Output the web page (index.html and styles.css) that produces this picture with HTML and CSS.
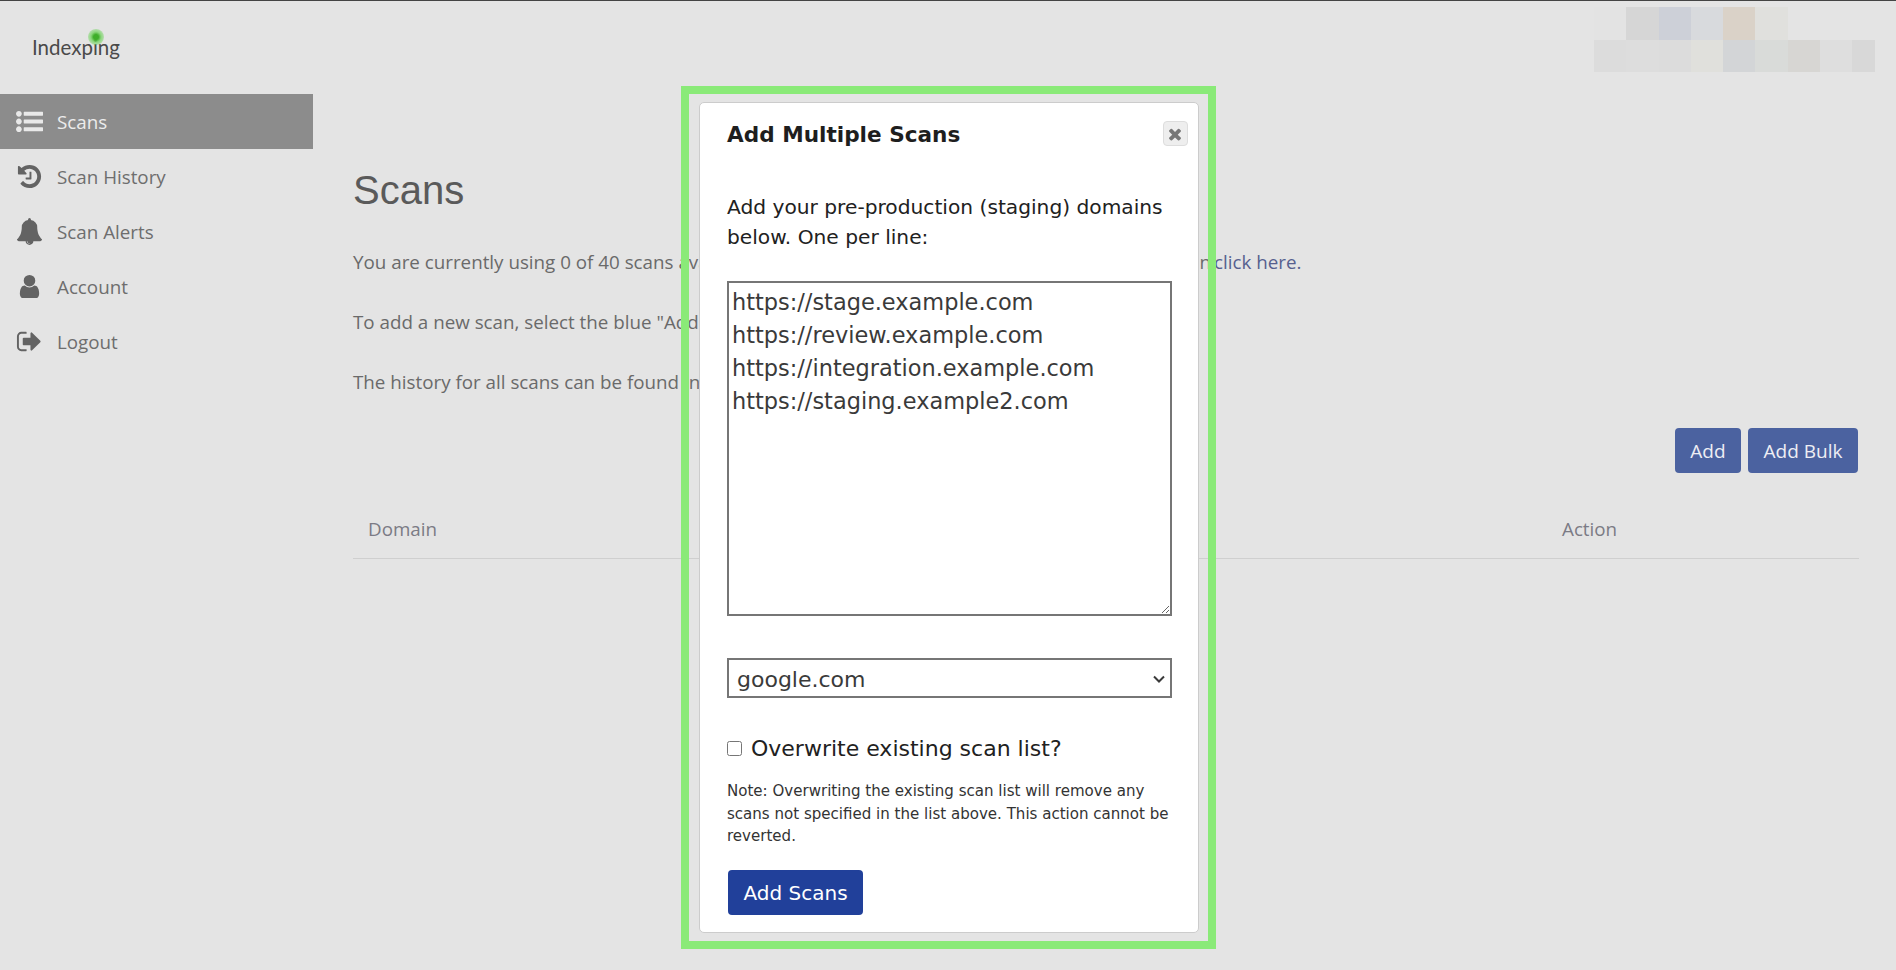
FILE: index.html
```html
<!DOCTYPE html>
<html lang="en">
<head>
<meta charset="utf-8">
<title>Scans</title>
<link rel="stylesheet" href="styles.css">
</head>
<body>
<div class="app">
  <header class="topbar">
    <div class="logo"><span class="logo-dot"></span>Indexping</div>
    <div class="account-blur">
      <i class="c c1"></i><i class="c c2"></i><i class="c c3"></i><i class="c c4"></i><i class="c c5"></i><i class="c c6"></i><i class="c c0"></i><i class="c c0"></i><i class="c c0"></i>
      <i class="c c7"></i><i class="c c8"></i><i class="c c7"></i><i class="c c9"></i><i class="c c10"></i><i class="c c11"></i><i class="c c12"></i><i class="c c13"></i><i class="c c14"></i>
    </div>
  </header>
  <div class="body-row">
    <nav class="sidebar">
      <a class="nav-item active"><svg class="nav-icon" viewBox="0 0 1792 1792"><path d="M384 1408q0 80-56 136t-136 56-136-56-56-136 56-136 136-56 136 56 56 136zm0-512q0 80-56 136t-136 56-136-56-56-136 56-136 136-56 136 56 56 136zm1408 416v192q0 13-9.500 22.500t-22.500 9.500h-1216q-13 0-22.500-9.500t-9.500-22.500v-192q0-13 9.500-22.500t22.500-9.500h1216q13 0 22.500 9.500t9.500 22.500zm-1408-928q0 80-56 136t-136 56-136-56-56-136 56-136 136-56 136 56 56 136zm1408 416v192q0 13-9.500 22.500t-22.500 9.500h-1216q-13 0-22.500-9.500t-9.500-22.500v-192q0-13 9.500-22.500t22.500-9.500h1216q13 0 22.500 9.500t9.500 22.500zm0-512v192q0 13-9.500 22.500t-22.500 9.500h-1216q-13 0-22.500-9.500t-9.500-22.500v-192q0-13 9.500-22.500t22.500-9.500h1216q13 0 22.500 9.500t9.500 22.500z"/></svg>Scans</a>
      <a class="nav-item"><svg class="nav-icon" viewBox="0 0 1792 1792"><path d="M1664 896q0 156-61 298t-164 245-245 164-298 61q-172 0-327-72.500t-264-204.500q-7-10-6.500-22.500t8.500-20.500l137-138q10-9 25-9 16 2 23 12 73 95 179 147t225 52q104 0 198.500-40.500t163.500-109.500 109.500-163.500 40.500-198.500-40.500-198.500-109.500-163.500-163.500-109.500-198.500-40.500q-98 0-188 35.500t-160 101.500l137 138q31 30 14 69-17 40-59 40h-448q-26 0-45-19t-19-45v-448q0-42 40-59 39-17 69 14l130 129q107-101 244.500-156.500t284.500-55.500q156 0 298 61t245 164 164 245 61 298zm-640-288v448q0 14-9 23t-23 9h-320q-14 0-23-9t-9-23v-64q0-14 9-23t23-9h224v-352q0-14 9-23t23-9h64q14 0 23 9t9 23z"/></svg>Scan History</a>
      <a class="nav-item"><svg class="nav-icon" viewBox="0 0 1792 1792"><path d="M912 1696q0-16-16-16-59 0-101.500-42.500t-42.500-101.500q0-16-16-16t-16 16q0 73 51.500 124.500t124.500 51.500q16 0 16-16zm816-288q0 52-38 90t-90 38h-448q0 106-75 181t-181 75-181-75-75-181h-448q-52 0-90-38t-38-90q50-42 91-88t85-119.500 74.500-158.500 50-206 19.500-260q0-152 117-282.500t307-158.500q-8-19-8-39 0-40 28-68t68-28 68 28 28 68q0 20-8 39 190 28 307 158.500t117 282.500q0 139 19.500 260t50 206 74.500 158.500 85 119.500 91 88z"/></svg>Scan Alerts</a>
      <a class="nav-item"><svg class="nav-icon" viewBox="0 0 1792 1792"><path d="M1536 1399q0 109-62.500 187t-150.500 78h-854q-88 0-150.500-78t-62.500-187q0-85 8.500-160.500t31.500-152 58.500-131 94-89 134.500-34.500q131 128 313 128t313-128q76 0 134.500 34.500t94 89 58.500 131 31.500 152 8.500 160.500zm-256-887q0 159-112.500 271.500t-271.500 112.500-271.500-112.500-112.500-271.500 112.500-271.500 271.500-112.500 271.500 112.500 112.500 271.500z"/></svg>Account</a>
      <a class="nav-item"><svg class="nav-icon" viewBox="0 0 1792 1792"><path d="M704 1440q0 4 1 20t.5 26.500-3 23.500-10 19.500-20.500 6.500h-320q-119 0-203.500-84.500t-84.500-203.500v-704q0-119 84.500-203.500t203.500-84.500h320q13 0 22.500 9.500t9.500 22.500q0 4 1 20t.5 26.500-3 23.500-10 19.500-20.500 6.500h-320q-66 0-113 47t-47 113v704q0 66 47 113t113 47h312l11.500 1 11.500 3 8 5.500 7 9 2 13.500zm928-544q0 26-19 45l-544 544q-19 19-45 19t-45-19-19-45v-288h-448q-26 0-45-19t-19-45v-384q0-26 19-45t45-19h448v-288q0-26 19-45t45-19 45 19l544 544q19 19 19 45z"/></svg>Logout</a>
    </nav>
    <main class="content">
      <h1 class="page-title">Scans</h1>
      <p class="intro">You are currently using 0 of 40 scans available on your plan. To get more scans, upgrade your plan <a class="link">click here.</a></p>
      <p class="intro">To add a new scan, select the blue "Add" button below.</p>
      <p class="intro">The history for all scans can be found in the Scan History section.</p>
      <div class="actions">
        <button class="btn">Add</button>
        <button class="btn">Add Bulk</button>
      </div>
      <div class="table-head">
        <span class="col-domain">Domain</span>
        <span class="col-action">Action</span>
      </div>
    </main>
  </div>
</div>

<div class="highlight">
  <form class="modal">
    <div class="modal-head">
      <h2 class="modal-title">Add Multiple Scans</h2>
      <button type="button" class="close"><svg class="close-icon" viewBox="0 0 1792 1792"><path d="M1490 1322q0 40-28 68l-136 136q-28 28-68 28t-68-28l-294-294-294 294q-28 28-68 28t-68-28l-136-136q-28-28-28-68t28-68l294-294-294-294q-28-28-28-68t28-68l136-136q28-28 68-28t68 28l294 294 294-294q28-28 68-28t68 28l136 136q28 28 28 68t-28 68l-294 294 294 294q28 28 28 68z"/></svg></button>
    </div>
    <p class="modal-intro">Add your pre-production (staging) domains below. One per line:</p>
    <textarea class="domains" spellcheck="false">https://stage.example.com
https://review.example.com
https://integration.example.com
https://staging.example2.com</textarea>
    <div class="engine-wrap">
      <select class="engine"><option>google.com</option></select>
      <svg class="chevron" viewBox="0 0 12 8"><path d="M1 1.500 6 6.500 11 1.500"/></svg>
    </div>
    <label class="overwrite"><input type="checkbox" class="check">Overwrite existing scan list?</label>
    <p class="note">Note: Overwriting the existing scan list will remove any scans not specified in the list above. This action cannot be reverted.</p>
    <button type="button" class="submit">Add Scans</button>
  </form>
</div>
</body>
</html>
```

FILE: styles.css
```css
* { box-sizing: border-box; }
html, body { margin: 0; height: 100%; overflow: hidden; }
body {
  background: #e4e4e4;
  font-family: "Open Sans", "Liberation Sans", sans-serif;
  color: #6a6a6a;
  position: relative;
}
.app { display: flex; flex-direction: column; height: 970px; }

.topbar {
  height: 94px;
  flex: none;
  border-top: 1px solid #444;
  display: flex;
  justify-content: space-between;
  padding: 6px 21px 0 32px;
}
.logo {
  position: relative;
  font-family: "Lato", "Open Sans", sans-serif;
  font-size: 20.500px;
  color: #4a4a4a;
  line-height: 24px;
  margin-top: 28px;
  height: 24px;
}
.logo-dot {
  position: absolute;
  left: 56px;
  top: -6px;
  width: 16px;
  height: 16px;
  border-radius: 50%;
  background: radial-gradient(circle, #3fae2a 0 22%, rgba(110, 210, 90, .75) 45%, rgba(140, 225, 120, 0) 100%);
}
.account-blur {
  display: grid;
  grid-template-columns: repeat(8, 32.250px) 23px;
  grid-auto-rows: 32.500px;
  height: 65px;
}
.c { display: block; }
.c0 { background: transparent; }
.c1 { background: #e3e3e3; }
.c2 { background: #d6d6d6; }
.c3 { background: #cdd0d8; }
.c4 { background: #d8dadd; }
.c5 { background: #dad2c8; }
.c6 { background: #e0e0dd; }
.c7 { background: #dcdcdc; }
.c8 { background: #dddddd; }
.c9 { background: #e0e0dc; }
.c10 { background: #d3d5d7; }
.c11 { background: #d9dbd9; }
.c12 { background: #d7d6d3; }
.c13 { background: #dedede; }
.c14 { background: #d8d8d8; }

.body-row { display: flex; flex: 1; }
.sidebar { width: 313px; flex: none; }
.nav-item {
  display: flex;
  align-items: center;
  height: 55px;
  padding-left: 16px;
  font-size: 18.800px;
  color: #6e6e6e;
}
.nav-item.active { background: #8c8c8c; color: #ececec; }
.nav-icon { width: 27px; height: 27px; fill: #636363; margin-right: 14px; flex: none; }
.active .nav-icon { fill: #e9e9e9; }

.content { flex: 1; padding: 0 37px 0 40px; }
.page-title {
  margin: 72px 0 0;
  font-family: "Liberation Sans", Arial, sans-serif;
  font-size: 40px;
  font-weight: 400;
  line-height: 48px;
  color: #5a5a5a;
}
.intro { margin: 0 0 33px; font-size: 18.800px; line-height: 27px; white-space: nowrap; }
.intro:first-of-type { margin-top: 35px; }
.link { color: #56608f; margin-left: -2px; }
.actions { display: flex; justify-content: flex-end; gap: 7px; margin-top: -1px; padding-right: 1px; }
.btn {
  height: 45px;
  padding: 0 15.500px;
  border: 0;
  border-radius: 4px;
  background: #4b62a0;
  color: #eeeef4;
  font: 19px "Open Sans", sans-serif;
}
.table-head {
  display: flex;
  justify-content: space-between;
  align-items: center;
  height: 86px;
  padding: 26px 0 0 15px;
  border-bottom: 1px solid #cfcfcf;
  font-size: 18.800px;
  color: #7b7b85;
}
.col-action { width: 297px; }

.highlight {
  position: absolute;
  left: 681px;
  top: 86px;
  width: 535px;
  height: 863px;
  border: 8px solid #8aea78;
  padding: 8px 9px 8px 10px;
}
.modal {
  height: 100%;
  background: #fff;
  border: 1px solid #ccc;
  border-radius: 5px;
  padding: 0 26px 0 27px;
  font-family: "DejaVu Sans", Verdana, sans-serif;
  color: #212121;
}
.modal-head { display: flex; justify-content: space-between; align-items: flex-start; margin-right: -15.500px; }
.modal-title { margin: 17px 0 0; font-size: 21.600px; line-height: 30px; font-weight: 700; color: #1e1e1e; }
.close {
  width: 25px;
  height: 25px;
  margin-top: 18px;
  padding: 0;
  display: flex;
  align-items: center;
  justify-content: center;
  background: #eee;
  border: 1px solid #ddd;
  border-radius: 4px;
}
.close-icon { width: 18px; height: 18px; fill: #777; }
.modal-intro { margin: 42px 0 0; font-size: 20.200px; line-height: 30px; }
.domains {
  display: block;
  width: 100%;
  height: 335px;
  margin-top: 29px;
  padding: 3px 3px 1px;
  border: 2px solid #767676;
  border-radius: 0;
  outline: 0;
  font: 22.450px/33px "DejaVu Sans", Verdana, sans-serif;
  color: #3a3a3a;
  background: #fff;
}
.engine-wrap { position: relative; margin-top: 42px; }
.engine {
  display: block;
  width: 100%;
  height: 40px;
  padding: 2px 8px 0;
  appearance: none;
  border: 2px solid #767676;
  border-radius: 0;
  background-color: #fff;
  font: 22px "DejaVu Sans", Verdana, sans-serif;
  color: #3a3a3a;
}
.chevron {
  position: absolute;
  right: 7px;
  top: 17px;
  width: 12px;
  height: 8px;
  fill: none;
  stroke: #3a3a3a;
  stroke-width: 2;
  pointer-events: none;
}
.overwrite { display: flex; align-items: center; margin-top: 34px; font-size: 22px; line-height: 33px; color: #212121; }
.check { width: 15px; height: 15px; margin: 0 9px 0 0; flex: none; }
.note { margin: 15px 0 0; font-size: 15.050px; line-height: 22.500px; color: #333; }
.submit {
  display: block;
  width: 135px;
  height: 45px;
  margin: 22px 0 0 1px;
  padding: 2px 0 0;
  border: 0;
  border-radius: 4px;
  background: #21409a;
  color: #fff;
  font: 20px "DejaVu Sans", Verdana, sans-serif;
}
```
